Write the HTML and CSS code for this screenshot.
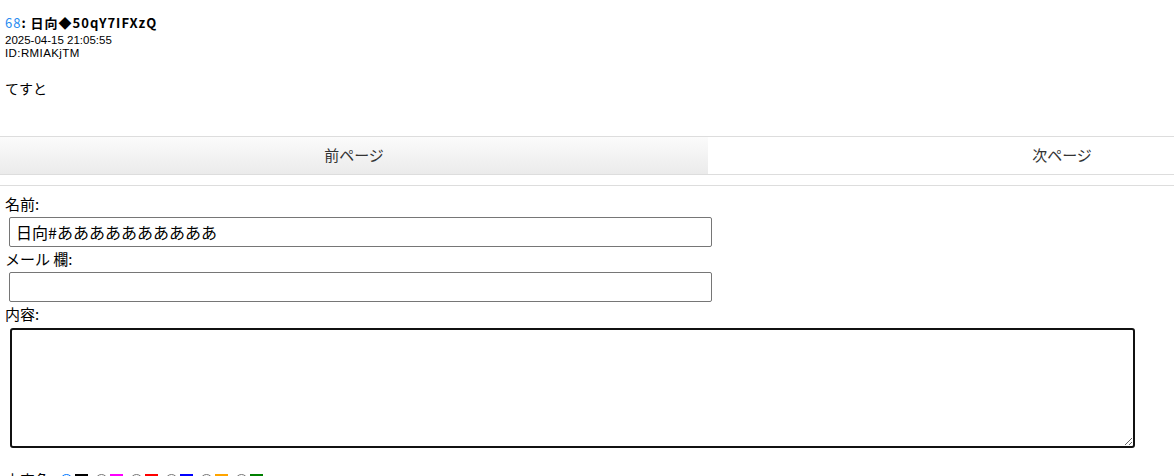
FILE: index.html
```html
<!DOCTYPE html>
<html>

<head>
<meta charset="utf-8">
<link rel="stylesheet" href="styles.css">
</head>

<body>

	<!--Post-->
	<div class="post">
		<div class="post-head"><span class="num">68</span>: 日向◆50qY7IFXzQ</div>
		<div class="post-meta">2025-04-15 21:05:55</div>
		<div class="post-meta id">ID:RMIAKjTM</div>
		<div class="post-body">てすと</div>
	</div>

	<!--Pager-->
	<div class="pager">
		<a class="page-btn prev" href="#">前ページ</a>
		<a class="page-btn next" href="#">次ページ</a>
	</div>
	<div class="rule"></div>

	<!--Reply form-->
	<form class="reply" action="">
		<div class="label">名前:</div>
		<input class="field" type="text" value="日向#ああああああああああ">
		<div class="label">メール 欄:</div>
		<input class="field" type="text" value="">
		<div class="label">内容:</div>
		<textarea class="content"></textarea>
		<div class="colors">
			<span class="colors-label">文字色</span>
			<span class="pick first"><input type="radio" name="color" checked><span class="swatch black"></span></span>
			<span class="pick"><input type="radio" name="color"><span class="swatch magenta"></span></span>
			<span class="pick"><input type="radio" name="color"><span class="swatch red"></span></span>
			<span class="pick"><input type="radio" name="color"><span class="swatch blue"></span></span>
			<span class="pick"><input type="radio" name="color"><span class="swatch orange"></span></span>
			<span class="pick"><input type="radio" name="color"><span class="swatch green"></span></span>
		</div>
	</form>

</body>
</html>
```

FILE: styles.css
```css
body {
    margin: 0;
    background-color: #fff;
    color: #000;
    font-family: "Noto Sans CJK JP", "Liberation Sans", sans-serif;
    overflow: hidden;
}

/* Post */
.post {
    padding: 15px 5px 0 5px;
}
.post-head {
    font-size: 13px;
    font-weight: bold;
    line-height: 16px;
    letter-spacing: 1px;
}
.post-head .num {
    color: #2a8cf0;
    font-weight: normal;
}
.post-meta {
    font-family: "Liberation Sans", "Noto Sans CJK JP", sans-serif;
    font-size: 11.5px;
    line-height: 13px;
}
.post-meta.id {
    letter-spacing: 0.4px;
}
.post-head + .post-meta {
    margin-top: 3px;
}
.post-body {
    margin-top: 18px;
    font-size: 14px;
    line-height: 20px;
}

/* Pager */
.pager {
    display: flex;
    margin-top: 38px;
    border-top: 1px solid #ddd;
    border-bottom: 1px solid #ddd;
    overflow: hidden;
}
.page-btn {
    flex: 0 0 708px;
    height: 37px;
    line-height: 36px;
    text-align: center;
    font-size: 15px;
    color: #333;
    text-decoration: none;
}
.prev {
    background: linear-gradient(#fbfbfb, #ebebeb);
}
.next {
    background-color: #fff;
}
.rule {
    margin-top: 10px;
    border-top: 1px solid #ddd;
}

/* Form */
.reply {
    padding: 8px 5px 0 5px;
}
.label {
    font-size: 15px;
    line-height: 20px;
}
.field {
    display: block;
    box-sizing: border-box;
    width: 703px;
    height: 30px;
    margin: 3px 0 2px 4px;
    padding: 1px 6px;
    border: 1px solid #767676;
    border-radius: 2px;
    font-family: "Noto Sans CJK JP", sans-serif;
    font-size: 16px;
    color: #000;
}
.content {
    display: block;
    box-sizing: border-box;
    width: 1125px;
    height: 120px;
    margin: 4px 0 0 5px;
    border: 2px solid #111;
    border-radius: 3px;
}
.colors {
    display: flex;
    align-items: flex-start;
    margin-top: 22px;
    font-size: 15px;
    line-height: 20px;
}
.colors-label {
    margin-right: 10px;
}
.pick {
    display: flex;
    align-items: center;
    margin-left: 7px;
    margin-top: 4px;
}
.pick.first {
    margin-left: 0;
}
.pick input {
    width: 13px;
    height: 13px;
    margin: 0 2px 0 0;
}
.swatch {
    display: inline-block;
    width: 13px;
    height: 13px;
}
.black { background-color: #000; }
.magenta { background-color: #f0f; }
.red { background-color: #f00; }
.blue { background-color: #00f; }
.orange { background-color: #ffa500; }
.green { background-color: #008000; }
```
